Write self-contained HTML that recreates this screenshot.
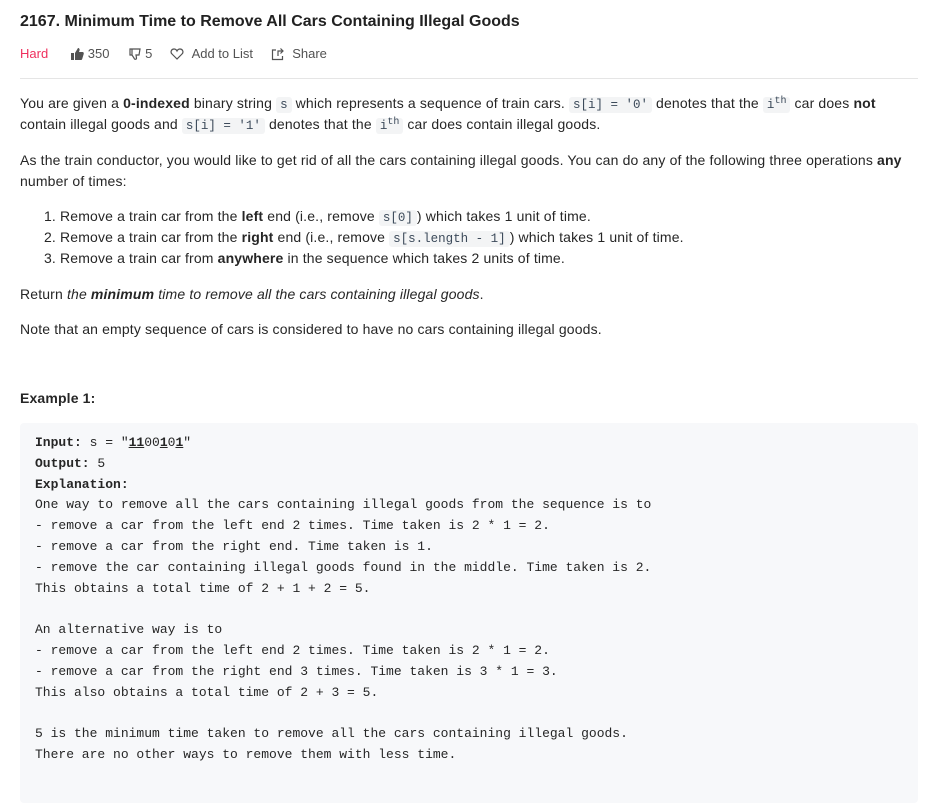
<!DOCTYPE html>
<html><head><meta charset="utf-8"><style>
body{margin:0;background:#fff;font-family:"Liberation Sans",sans-serif;color:#262626;width:939px;height:783px;overflow:hidden}
.w{position:absolute;left:20px;top:0;width:898px}
h1{position:absolute;top:13px;margin:0;font-size:16px;font-weight:600;color:#212121}
.meta{position:absolute;top:46px;font-size:13px;color:#525252;display:flex;align-items:center;white-space:nowrap}
.meta span{display:inline-flex;align-items:center}
hr{position:absolute;top:78px;left:0;width:898px;border:0;border-top:1px solid #e5e5e5;margin:0}
.b{position:absolute;left:0;width:898px;font-size:14px;line-height:21px;letter-spacing:0.15px;white-space:nowrap}
code{font-family:"Liberation Mono",monospace;font-size:12.5px;line-height:14px;background:#f3f4f5;color:#3c4a5a;border-radius:3px;padding:1px 4px;display:inline-block;letter-spacing:0}
sup{line-height:0;font-size:10px}
ol{margin:0;padding-left:40px}
pre{position:absolute;left:0;top:423px;width:868px;margin:0;background:#f7f8fa;padding:10px 15px;font-family:"Liberation Mono",monospace;font-size:13px;line-height:20.8px;color:#262626;height:360px;border-radius:4px}
</style></head><body><div class="w">
<h1>2167. Minimum Time to Remove All Cars Containing Illegal Goods</h1>
<div class="meta"><span style="color:#ef2f5d;font-weight:500;margin-right:22px">Hard</span>
<span style="margin-right:18px"><svg width="14" height="14" viewBox="0 0 14 14"><path d="M1 6h3v7H1zM5 6l3-5c1 0 2 1 1.5 2.5L9 5h3.5c1 0 1.5 1 1.2 2l-1.5 5c-.2.7-.7 1-1.4 1H5z" fill="#525252"/></svg>&nbsp;350</span>
<span style="margin-right:18px"><svg width="14" height="14" viewBox="0 0 14 14"><path d="M2 2h10l-1 6H8l.5 3c0 1.5-2 2-2.5 0L4 8H2zM4 2v6" fill="none" stroke="#525252" stroke-width="1.2"/></svg>&nbsp;5</span>
<span style="margin-right:18px"><svg width="14" height="14" viewBox="0 0 14 14"><path d="M7 12L2 7C0 5 1.5 2 4 2c1.5 0 2.5 1 3 2 .5-1 1.5-2 3-2 2.5 0 4 3 2 5z" fill="none" stroke="#525252" stroke-width="1.2"/></svg>&nbsp;&nbsp;Add to List</span>
<span><svg width="14" height="14" viewBox="0 0 14 14"><path d="M5 3H1.5v9.5h10V9M7 9V4h5M9.5 1.5L12 4 9.5 6.5" fill="none" stroke="#525252" stroke-width="1.2"/></svg>&nbsp;&nbsp;Share</span></div>
<hr>
<div class="b" style="top:93px">You are given a <b>0-indexed</b> binary string <code>s</code> which represents a sequence of train cars. <code>s[i] = '0'</code> denotes that the <code>i<sup>th</sup></code> car does <b>not</b><br>contain illegal goods and <code>s[i] = '1'</code> denotes that the <code>i<sup>th</sup></code> car does contain illegal goods.</div>
<div class="b" style="top:150px">As the train conductor, you would like to get rid of all the cars containing illegal goods. You can do any of the following three operations <b>any</b><br>number of times:</div>
<div class="b" style="top:206px"><ol><li>Remove a train car from the <b>left</b> end (i.e., remove <code>s[0]</code>) which takes 1 unit of time.</li>
<li>Remove a train car from the <b>right</b> end (i.e., remove <code>s[s.length - 1]</code>) which takes 1 unit of time.</li>
<li>Remove a train car from <b>anywhere</b> in the sequence which takes 2 units of time.</li></ol></div>
<div class="b" style="top:284px">Return <i>the <b>minimum</b> time to remove all the cars containing illegal goods</i>.</div>
<div class="b" style="top:319px">Note that an empty sequence of cars is considered to have no cars containing illegal goods.</div>
<div class="b" style="top:388px;font-weight:bold">Example 1:</div>
<pre><b>Input:</b> s = "<b><u>11</u></b>00<b><u>1</u></b>0<b><u>1</u></b>"
<b>Output:</b> 5
<b>Explanation:</b>
One way to remove all the cars containing illegal goods from the sequence is to
- remove a car from the left end 2 times. Time taken is 2 * 1 = 2.
- remove a car from the right end. Time taken is 1.
- remove the car containing illegal goods found in the middle. Time taken is 2.
This obtains a total time of 2 + 1 + 2 = 5. 

An alternative way is to
- remove a car from the left end 2 times. Time taken is 2 * 1 = 2.
- remove a car from the right end 3 times. Time taken is 3 * 1 = 3.
This also obtains a total time of 2 + 3 = 5.

5 is the minimum time taken to remove all the cars containing illegal goods.
There are no other ways to remove them with less time.</pre>
</div></body></html>
